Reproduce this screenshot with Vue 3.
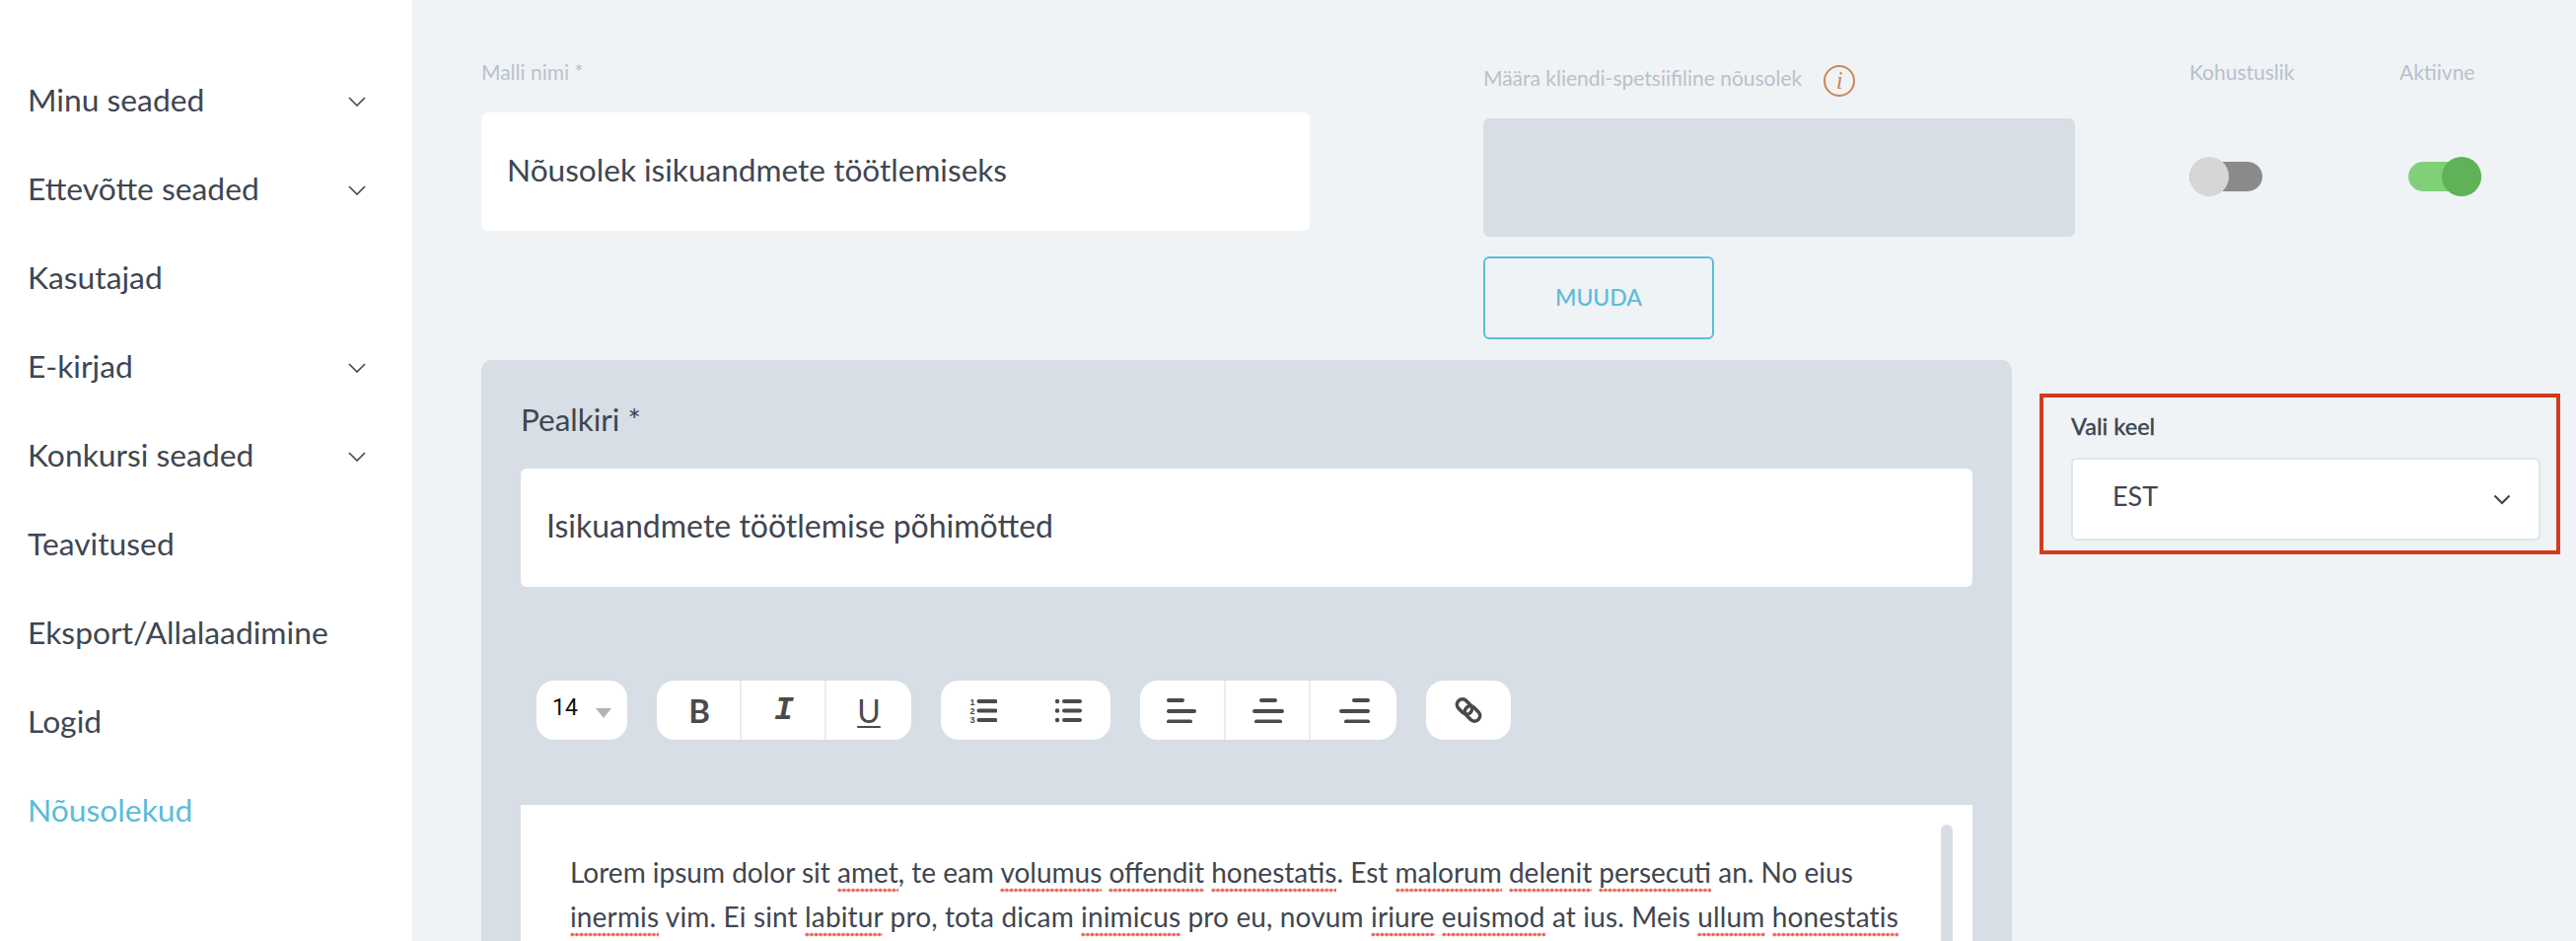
<script setup>
const nav = [
  { label: 'Minu seaded', arrow: true },
  { label: 'Ettevõtte seaded', arrow: true },
  { label: 'Kasutajad' },
  { label: 'E-kirjad', arrow: true },
  { label: 'Konkursi seaded', arrow: true },
  { label: 'Teavitused' },
  { label: 'Eksport/Allalaadimine' },
  { label: 'Logid' },
  { label: 'Nõusolekud', active: true }
]
</script>

<template>
  <div class="page">
    <aside class="sidebar">
      <div v-for="item in nav" :key="item.label" class="nav-row" :class="{ active: item.active }">
        <span>{{ item.label }}</span>
        <svg v-if="item.arrow" class="nav-chevron" width="18" height="10" viewBox="0 0 18 10"><path d="M1 1l8 8 8-8" fill="none" stroke="#3f4650" stroke-width="1.6"/></svg>
      </div>
    </aside>

    <main class="main">
      <section class="top">
        <div class="name-field">
          <label class="label">Malli nimi *</label>
          <div class="name-input">Nõusolek isikuandmete töötlemiseks</div>
        </div>
        <div class="consent-field">
          <div class="consent-label">
            <label class="label">Määra kliendi-spetsiifiline nõusolek</label>
            <span class="info">i</span>
          </div>
          <div class="consent-box"></div>
          <button class="muuda">MUUDA</button>
        </div>
        <div class="switch-col first">
          <label class="label">Kohustuslik</label>
          <div class="switch off"><span class="knob"></span></div>
        </div>
        <div class="switch-col">
          <label class="label">Aktiivne</label>
          <div class="switch on"><span class="knob"></span></div>
        </div>
      </section>

      <section class="lower">
        <div class="panel">
          <h2 class="panel-title">Pealkiri *</h2>
          <div class="title-input">Isikuandmete töötlemise põhimõtted</div>

          <div class="toolbar">
            <div class="tgroup size-group">
              <span class="size">14</span>
              <span class="caret"></span>
            </div>
            <div class="tgroup">
              <div class="cell"><span class="t-b">B</span></div>
              <div class="cell"><span class="t-i">I</span></div>
              <div class="cell"><span class="t-u">U</span></div>
            </div>
            <div class="tgroup">
              <div class="cell plain">
                <svg width="28" height="26" viewBox="0 0 28 26">
                  <text x="0.5" y="7.5" class="num">1</text><text x="0.5" y="16.5" class="num">2</text><text x="0.5" y="25.5" class="num">3</text>
                  <path d="M9.5 4h17M9.5 13.5h17M9.5 23h17" stroke="#4a4a4a" stroke-width="4" stroke-linecap="round"/>
                </svg>
              </div>
              <div class="cell plain">
                <svg width="28" height="26" viewBox="0 0 28 26">
                  <path d="M3 4h.1M3 13.5h.1M3 23h.1" stroke="#4a4a4a" stroke-width="4.4" stroke-linecap="round"/>
                  <path d="M10 4h16M10 13.5h16M10 23h16" stroke="#4a4a4a" stroke-width="4" stroke-linecap="round"/>
                </svg>
              </div>
            </div>
            <div class="tgroup wide">
              <div class="cell">
                <svg width="32" height="26" viewBox="0 0 32 26"><path d="M2 3h14M2 14h26M2 24.500h22" stroke="#4a4a4a" stroke-width="4" stroke-linecap="round"/></svg>
              </div>
              <div class="cell">
                <svg width="32" height="26" viewBox="0 0 32 26"><path d="M9 3h14M2 14h28M4 24.500h24" stroke="#4a4a4a" stroke-width="4" stroke-linecap="round"/></svg>
              </div>
              <div class="cell">
                <svg width="32" height="26" viewBox="0 0 32 26"><path d="M16 3h14M3 14h27M8 24.500h22" stroke="#4a4a4a" stroke-width="4" stroke-linecap="round"/></svg>
              </div>
            </div>
            <div class="tgroup">
              <div class="cell plain">
                <svg width="28" height="28" viewBox="0 0 28 28" fill="none" stroke="#4a4a4a" stroke-width="3.6">
                  <rect x="1.500" y="5" width="17" height="11" rx="5.500" transform="rotate(45 10 10.500)"/>
                  <rect x="9.500" y="12" width="17" height="11" rx="5.500" transform="rotate(45 18 17.500)"/>
                </svg>
              </div>
            </div>
          </div>

          <div class="editor">
            <p class="line">Lorem ipsum dolor sit <span class="sp">amet</span>, te eam <span class="sp">volumus</span> <span class="sp">offendit</span> <span class="sp">honestatis</span>. Est <span class="sp">malorum</span> <span class="sp">delenit</span> <span class="sp">persecuti</span> an. No eius</p>
            <p class="line second"><span class="sp">inermis</span> vim. Ei sint <span class="sp">labitur</span> pro, tota dicam <span class="sp">inimicus</span> pro eu, novum <span class="sp">iriure</span> <span class="sp">euismod</span> at ius. Meis <span class="sp">ullum</span> <span class="sp">honestatis</span></p>
            <span class="scrollbar"></span>
          </div>
        </div>

        <div class="lang-box">
          <div class="lang-label">Vali keel</div>
          <div class="lang-select">
            <span class="lang-value">EST</span>
            <svg width="18" height="11" viewBox="0 0 18 11"><path d="M1.500 1.500l7.500 7.500 7.500-7.500" fill="none" stroke="#3f4650" stroke-width="2.2"/></svg>
          </div>
        </div>
      </section>
    </main>
  </div>
</template>

<style scoped>
.page {
  display: flex;
  width: 2612px;
  height: 954px;
  overflow: hidden;
  background: #eff3f6;
  font-family: Lato, "Liberation Sans", sans-serif;
  color: #3f4650;
}
.sidebar {
  flex: 0 0 418px;
  box-sizing: border-box;
  padding: 56px 0 0 28px;
  background: #fff;
}
.nav-row {
  position: relative;
  display: flex;
  align-items: center;
  justify-content: space-between;
  width: 343px;
  height: 90px;
  font-size: 31.800px;
}
.nav-row.active { color: #5bbcd9; }
.nav-chevron { margin-top: 4px; }
.main {
  flex: 1;
  min-width: 0;
  box-sizing: border-box;
  padding: 60px 0 0 70px;
}
.top {
  display: flex;
  align-items: flex-start;
  height: 305px;
}
.label {
  display: block;
  height: 26px;
  font-size: 21px;
  line-height: 26px;
  color: #b8c1cb;
  white-space: nowrap;
}
.name-field { width: 840px; margin-right: 176px; }
.name-input {
  display: flex;
  align-items: center;
  box-sizing: border-box;
  height: 120px;
  margin-top: 28px;
  padding: 0 0 5px 26px;
  border-radius: 6px;
  background: #fff;
  font-size: 31.600px;
}
.consent-field { width: 600px; margin-top: 6px; margin-right: 116px; }
.consent-label { display: flex; align-items: center; gap: 22px; height: 26px; }
.info {
  display: flex;
  align-items: center;
  justify-content: center;
  box-sizing: border-box;
  width: 32px;
  height: 32px;
  margin-top: 6px;
  border: 2px solid #cf8651;
  border-radius: 50%;
  color: #cf8651;
  font: italic 25px "Liberation Serif", serif;
}
.consent-box {
  height: 120px;
  margin-top: 28px;
  border-radius: 6px;
  background: #d7dee5;
}
.muuda {
  display: block;
  width: 234px;
  height: 84px;
  margin-top: 20px;
  padding: 0 0 3px;
  border: 2px solid #5bbcd9;
  border-radius: 6px;
  background: transparent;
  color: #5bbcd9;
  font: 500 23px Lato, sans-serif;
}
.switch-col { width: 108px; }
.switch-col.first { margin-right: 105px; }
.switch {
  position: relative;
  width: 74px;
  height: 30px;
  margin-top: 78px;
  border-radius: 15px;
}
.switch-col:last-child .switch { margin-left: 9px; }
.switch.off { background: #8a8a8a; }
.switch.on { background: #80d077; }
.knob {
  position: absolute;
  top: -5px;
  width: 40px;
  height: 40px;
  border-radius: 50%;
}
.off .knob { left: 0; background: #d6d6d6; }
.on .knob { right: 0; background: #5fb257; }
.lower { display: flex; align-items: flex-start; }
.panel {
  flex: 0 0 1552px;
  box-sizing: border-box;
  padding: 40px 40px 40px;
  border-radius: 10px;
  background: #d7dee5;
}
.panel-title {
  margin: 0 0 30px;
  font-size: 31.500px;
  font-weight: 400;
  line-height: 40px;
}
.title-input {
  display: flex;
  align-items: center;
  box-sizing: border-box;
  height: 120px;
  padding: 0 0 5px 26px;
  border-radius: 6px;
  background: #fff;
  font-size: 32px;
}
.toolbar {
  display: flex;
  gap: 30px;
  height: 60px;
  margin: 95px 0 66px 16px;
}
.tgroup {
  display: flex;
  height: 60px;
  border-radius: 18px;
  background: #fff;
}
.size-group {
  position: relative;
  width: 92px;
  align-items: center;
  box-sizing: border-box;
  padding: 0 0 6px 16px;
  font: 23px Roboto, sans-serif;
  color: #111;
}
.caret {
  position: absolute;
  left: 60px;
  top: 28px;
  border-left: 8px solid transparent;
  border-right: 8px solid transparent;
  border-top: 10px solid #b3b3b3;
}
.cell {
  display: flex;
  align-items: center;
  justify-content: center;
  width: 86px;
  height: 60px;
  color: #4a4a4a;
}
.wide .cell { width: 86.670px; }
.cell + .cell { border-left: 2px solid #ececec; margin-left: -2px; }
.cell.plain + .cell.plain { border-left: 0; margin-left: 0; }
.t-b { font: 700 33px Lato, sans-serif; }
.t-i { font: italic 700 33px "Liberation Mono", monospace; }
.t-u { font: 400 32px Lato, sans-serif; text-decoration: underline; text-underline-offset: 3px; text-decoration-thickness: 2px; }
.num { font: 700 9px "Liberation Sans", sans-serif; fill: #4a4a4a; }
.editor {
  position: relative;
  height: 400px;
  box-sizing: border-box;
  padding: 46px 0 0 50px;
  background: #fff;
}
.line {
  margin: 0;
  font-size: 28px;
  line-height: 45px;
  white-space: nowrap;
}
.line.second { letter-spacing: 0.14px; }
.sp {
  padding-bottom: 4px;
  background: radial-gradient(circle at center, #ef6a60 1.7px, transparent 2.200px) left bottom / 4.600px 5px repeat-x;
}
.scrollbar {
  position: absolute;
  top: 20px;
  right: 20px;
  bottom: 0;
  width: 12px;
  border-radius: 6px;
  background: #d7dee5;
}
.lang-box {
  box-sizing: border-box;
  flex: 0 0 528px;
  height: 163px;
  margin: 34px 0 0 28px;
  padding: 15px 16px 0 28px;
  border: 4px solid #d43a1e;
}
.lang-label { font-size: 23.500px; font-weight: 500; line-height: 28px; -webkit-text-stroke: 0.3px #3f4650; }
.lang-select {
  display: flex;
  align-items: center;
  justify-content: space-between;
  box-sizing: border-box;
  width: 476px;
  height: 84px;
  margin-top: 18px;
  padding: 0 28px 0 40px;
  border: 2px solid #dde6e9;
  border-radius: 6px;
  background: #fff;
  font-size: 27px;
}
.lang-value { margin-bottom: 8px; }
</style>
